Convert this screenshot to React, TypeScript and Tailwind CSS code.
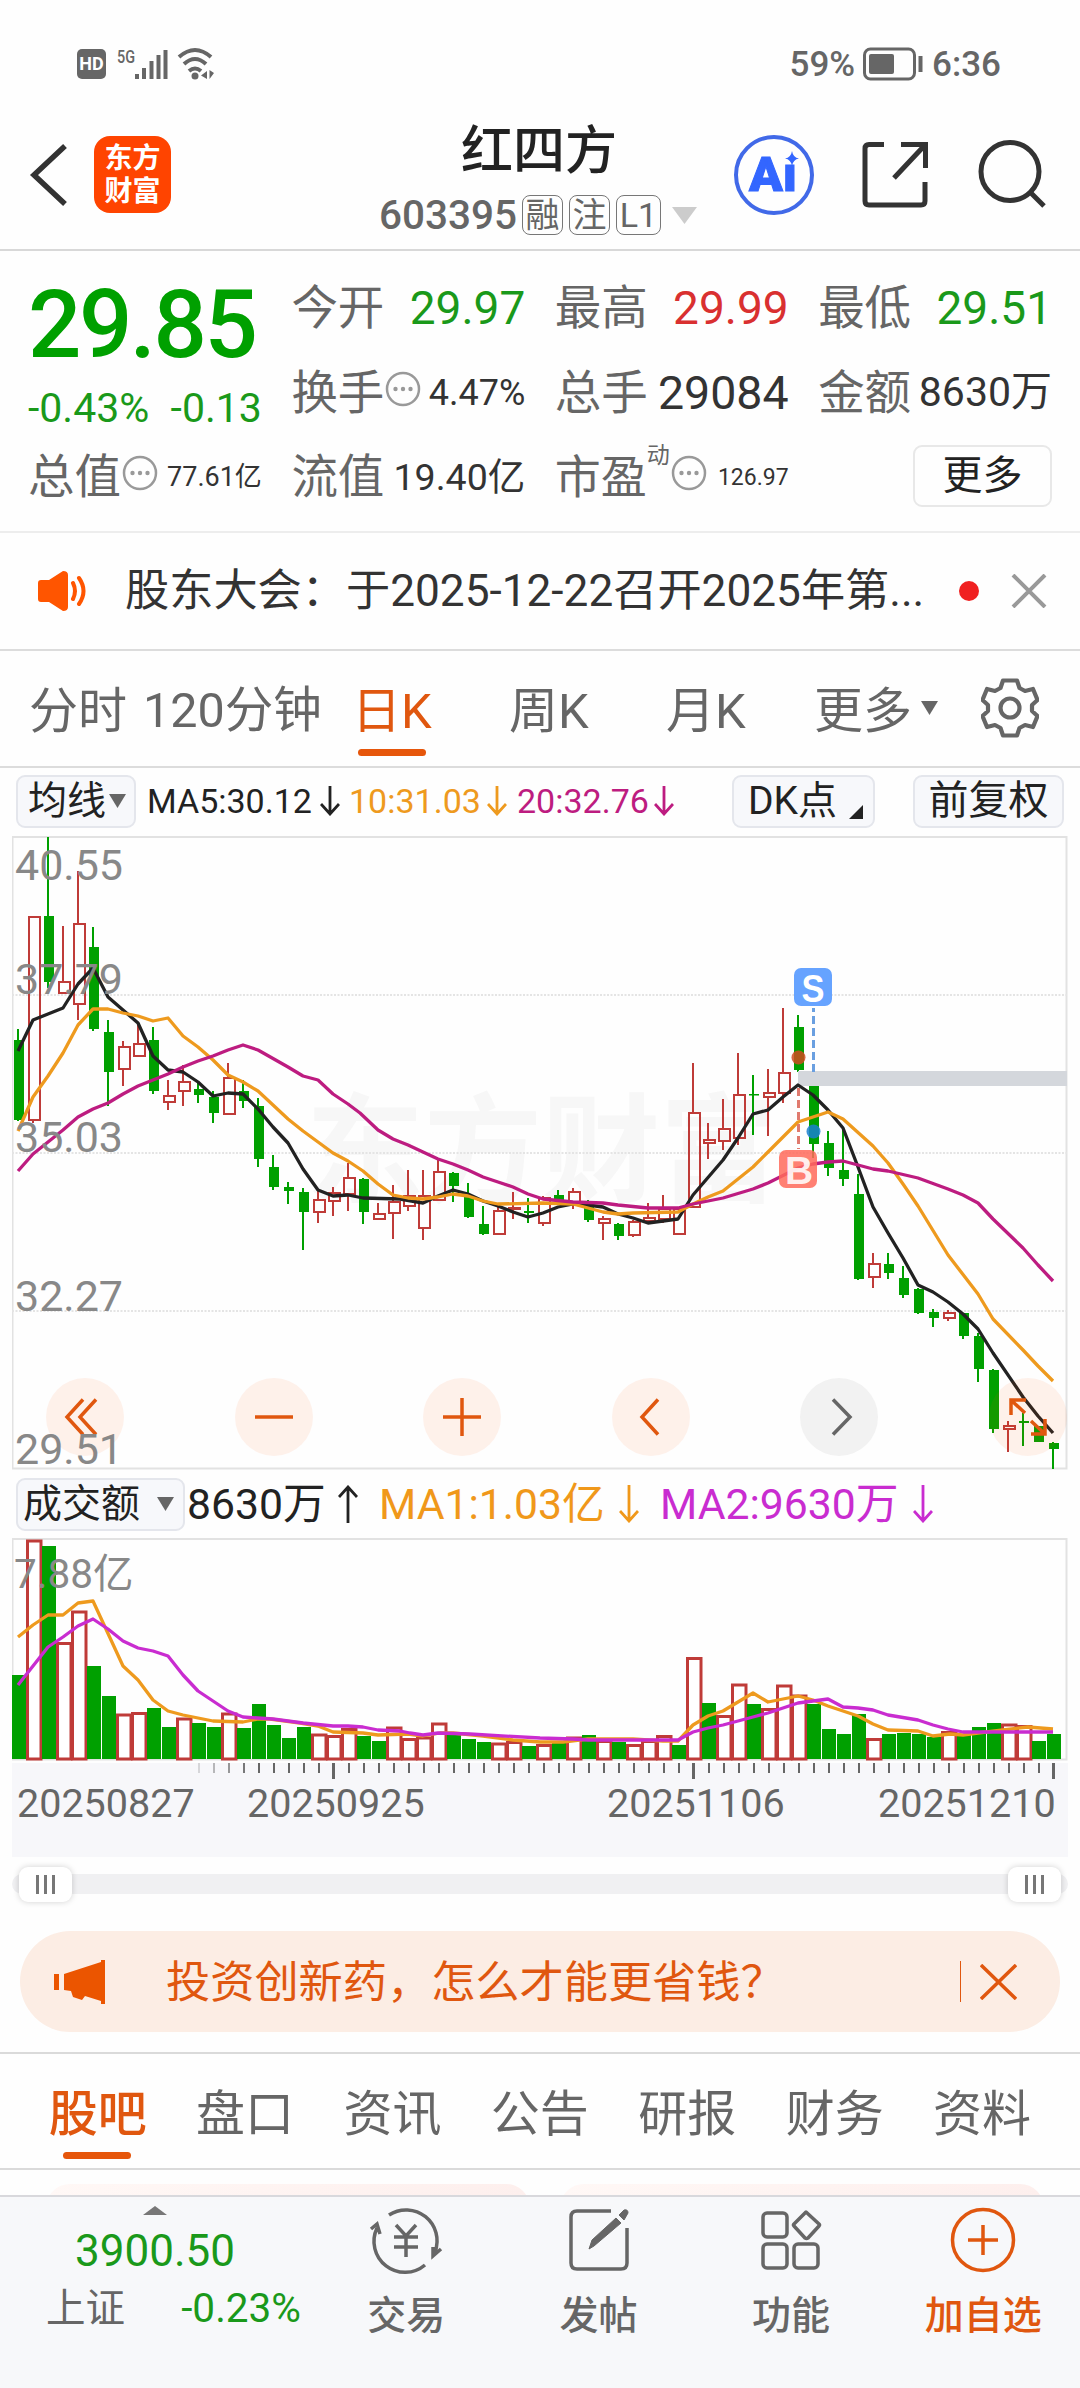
import type { ReactNode } from "react";

// [up, high, bodyTop, bodyBottom, low]
type Candle = [number, number, number, number, number];

const candles: Candle[] = [
  [0, 1029, 1040, 1120, 1121], [1, 916, 916, 1121, 1123], [0, 837, 916, 982, 988], [1, 926, 981, 994, 994],
  [1, 871, 923, 1005, 1020], [0, 927, 947, 1029, 1031], [0, 1020, 1032, 1072, 1106], [1, 1041, 1046, 1070, 1086],
  [1, 1022, 1043, 1057, 1057], [0, 1027, 1040, 1091, 1094], [1, 1080, 1095, 1103, 1110], [1, 1065, 1081, 1092, 1106],
  [0, 1083, 1089, 1095, 1103], [0, 1091, 1097, 1113, 1123], [1, 1063, 1077, 1115, 1115], [0, 1080, 1091, 1101, 1108],
  [0, 1098, 1106, 1159, 1167], [0, 1155, 1167, 1187, 1190], [0, 1182, 1187, 1191, 1204], [0, 1188, 1192, 1212, 1250],
  [1, 1191, 1199, 1213, 1223], [1, 1187, 1192, 1202, 1216], [1, 1163, 1177, 1195, 1211], [0, 1178, 1179, 1212, 1224],
  [1, 1203, 1213, 1220, 1220], [1, 1185, 1201, 1214, 1239], [1, 1170, 1195, 1207, 1211], [1, 1170, 1195, 1229, 1240],
  [1, 1160, 1171, 1201, 1201], [0, 1172, 1173, 1186, 1202], [0, 1183, 1195, 1217, 1218], [0, 1206, 1224, 1234, 1235],
  [1, 1205, 1210, 1235, 1235], [1, 1192, 1207, 1210, 1219], [0, 1198, 1211, 1213, 1223], [1, 1196, 1197, 1224, 1226],
  [0, 1190, 1195, 1201, 1201], [1, 1188, 1191, 1203, 1209], [0, 1200, 1201, 1220, 1222], [1, 1216, 1218, 1224, 1240],
  [0, 1223, 1224, 1236, 1240], [1, 1220, 1221, 1236, 1237], [1, 1203, 1217, 1222, 1223], [1, 1195, 1208, 1220, 1223],
  [1, 1208, 1208, 1235, 1235], [1, 1063, 1112, 1208, 1208], [1, 1123, 1139, 1144, 1159], [1, 1099, 1128, 1142, 1150],
  [1, 1053, 1094, 1139, 1145], [0, 1075, 1094, 1095.5, 1135], [1, 1069, 1092, 1098, 1136], [1, 1008, 1072, 1094, 1103],
  [0, 1015, 1027, 1070, 1072], [0, 1080, 1080, 1144, 1158], [0, 1131, 1143, 1168, 1176], [0, 1127, 1170, 1179, 1186],
  [0, 1174, 1194, 1279, 1280], [1, 1253, 1263, 1278, 1288], [0, 1253, 1264, 1273, 1279], [0, 1266, 1278, 1295, 1298],
  [0, 1288, 1289, 1313, 1314], [0, 1309, 1312, 1318, 1327], [1, 1310, 1312, 1319, 1321], [0, 1313, 1313, 1336, 1339],
  [0, 1333, 1336, 1369, 1382], [0, 1369, 1370, 1429, 1433], [1, 1421, 1425, 1430, 1452], [0, 1413, 1421, 1423, 1446],
  [0, 1426, 1426, 1442, 1442], [0, 1442, 1443, 1449, 1469],
];

// [up, barTop]
const volumes: [number, number][] = [
  [0, 1675], [1, 1539.5], [0, 1546], [1, 1642], [1, 1610.5], [0, 1666], [0, 1696], [1, 1713.5], [1, 1712], [0, 1708],
  [0, 1727], [1, 1717.5], [0, 1723], [0, 1727], [1, 1712.5], [0, 1728], [0, 1704], [0, 1725], [0, 1738], [0, 1727],
  [1, 1733.5], [1, 1735], [1, 1728], [0, 1736], [0, 1741], [1, 1726.5], [1, 1738], [1, 1736.5], [1, 1722.5], [0, 1735],
  [0, 1739], [0, 1742], [1, 1742.5], [1, 1741], [0, 1746], [1, 1744], [0, 1743], [1, 1736.5], [0, 1735], [1, 1740],
  [0, 1742], [1, 1744], [1, 1740], [1, 1735], [0, 1745], [1, 1657], [0, 1703], [1, 1715], [1, 1683.5], [0, 1704],
  [1, 1708], [1, 1684.5], [1, 1694.5], [0, 1704], [0, 1729], [0, 1734], [0, 1714], [1, 1738], [0, 1734], [0, 1733],
  [0, 1734], [0, 1737], [1, 1731], [0, 1735], [0, 1727], [0, 1723], [1, 1723.5], [1, 1725], [0, 1741], [0, 1734],
];

const ma5 =
  "18,1051 33,1020 48,1014 63,1008 78,984 93,968 108,997 123,1010 138,1023 153,1056 168,1070 183,1072 198,1082 213,1096 228,1093 243,1094 258,1109 273,1127 288,1143 303,1169 318,1190 333,1196 348,1195 363,1198 400,1199 423,1203 438,1196 453,1190 468,1194 483,1201 498,1206 513,1212 528,1217 543,1213 558,1207 573,1204 588,1205 603,1207 618,1214 633,1218 648,1223 663,1221 678,1219 693,1195 723,1160 738,1138 753,1114 768,1110 783,1097 798,1085 813,1095 828,1110 843,1128 858,1167 873,1207 888,1233 903,1258 918,1285 933,1292 948,1302 963,1314 978,1329 993,1353 1023,1397 1038,1416 1053,1433";
const ma10 =
  "18,1131 33,1097 48,1076 63,1053 78,1025 93,1009 108,1009 123,1013 138,1016 153,1021 168,1018 183,1036 198,1047 213,1060 228,1075 243,1082 258,1091 273,1105 288,1119 303,1131 318,1142 333,1153 348,1161 363,1171 378,1184 393,1195 408,1198 423,1199 438,1197 453,1194 468,1196 483,1201 498,1204 543,1203 573,1204 588,1208 603,1212 618,1214 633,1213 678,1212 693,1204 708,1197 723,1191 753,1167 768,1152 798,1122 813,1117 828,1112 843,1119 873,1146 888,1163 903,1184 918,1206 948,1255 978,1294 993,1319 1023,1350 1038,1366 1053,1381";
const ma20 =
  "18,1171 33,1154 48,1142 63,1130 78,1117 93,1109 108,1103 123,1094 138,1086 168,1074 183,1067 198,1061 213,1056 228,1050 243,1045 258,1050 288,1067 303,1076 318,1080 333,1094 348,1104 360,1113 378,1130 393,1139 408,1145 423,1152 438,1159 453,1164 468,1170 483,1177 498,1182 513,1187 528,1194 543,1199 573,1202 603,1203 618,1205 648,1208 678,1208 693,1204 723,1198 753,1189 768,1183 798,1168 813,1164 828,1162 843,1161 873,1169 888,1171 918,1178 948,1189 963,1195 978,1203 993,1219 1023,1248 1038,1265 1053,1281";
const volMa1 =
  "18,1637 33,1625 48,1615 63,1615 78,1603 93,1601 123,1666 138,1680 153,1700 168,1711 183,1715 198,1718 213,1721 243,1722 258,1719 270,1719 300,1723 318,1726 333,1732 363,1733 378,1735 408,1734 423,1736 440,1733 453,1733 483,1736 513,1740 540,1742 563,1742 588,1739 633,1739 663,1741 678,1741 693,1725 708,1716 723,1711 753,1693 768,1702 783,1699 798,1696 813,1700 828,1706 858,1716 873,1724 888,1730 918,1731 933,1736 950,1734 963,1735 978,1733 1003,1730 1028,1727 1053,1729";
const volMa2 =
  "18,1685 33,1666 48,1647 63,1637 78,1626 93,1619 108,1629 123,1641 138,1648 153,1651 168,1656 183,1675 198,1691 228,1711 243,1717 273,1719 303,1723 333,1726 348,1726 363,1727 378,1730 400,1731 410,1733 423,1735 438,1733 470,1734 540,1738 573,1739 588,1740 633,1740 678,1740 693,1732 708,1728 723,1725 738,1721 753,1717 768,1713 798,1703 813,1701 828,1699 843,1707 858,1708 873,1710 888,1715 918,1720 933,1725 948,1729 963,1732 1053,1732";

const priceLabels: [string, number][] = [
  ["40.55", 880],
  ["37.79", 994],
  ["35.03", 1152],
  ["32.27", 1311],
  ["29.51", 1464],
];

function StatusBar() {
  return (
    <div className="flex h-[100px] items-center pl-[77px] pr-[79px] pt-[32px] pb-1 text-[#666]">
      <span className="flex h-[30px] w-[29px] items-center justify-center rounded-[5px] bg-[#666] text-[18px] font-bold leading-none text-white">
        HD
      </span>
      <svg className="ml-[9px] overflow-visible" width="99" height="32" viewBox="115 48 99 32">
        <text x="117" y="63" fontSize="19" fontWeight="500" fill="#666" textLength="18" lengthAdjust="spacingAndGlyphs">5G</text>
        <path d="M137 74V79M144 68V79M151.500 61V79M158.500 55V79M165.500 50V79" stroke="#666" strokeWidth="4" />
        <path d="M179 57Q195 43 211 57M184 64Q195 54 206 64M189 71Q195 66 201 71" fill="none" stroke="#666" strokeWidth="4" />
        <circle cx="195" cy="76" r="3.500" fill="#666" />
        <path d="M207 71V79L201 75.500ZM209.500 70V79L214 73Z" fill="#666" />
      </svg>
      <span className="ml-auto text-[35px] font-medium leading-none">59%</span>
      <svg className="ml-[8px]" width="62" height="34" viewBox="0 0 62 34">
        <rect x="1.500" y="2" width="50" height="30" rx="6" fill="none" stroke="#666" strokeWidth="3" />
        <rect x="6" y="7" width="25" height="20" rx="2" fill="#666" />
        <path d="M57.500 9V25" stroke="#666" strokeWidth="4" />
      </svg>
      <span className="ml-[7px] text-[35px] font-medium leading-none">6:36</span>
    </div>
  );
}

function Badge({ children, className }: { children: ReactNode; className: string }) {
  return (
    <span className={`flex h-[40px] items-center justify-center rounded-[8px] border border-[#777] text-[34px] leading-none text-[#666] ${className}`}>
      {children}
    </span>
  );
}

function Header() {
  return (
    <header className="flex h-[151px] border-b-2 border-[#d8d8d8] pl-[28px]">
      <svg className="mt-[43px]" width="42" height="64" viewBox="28 143 42 64">
        <path d="M65 146L34 175L65 204" fill="none" stroke="#333" strokeWidth="5.500" />
      </svg>
      <div className="ml-[24px] mt-[36px] flex h-[77px] w-[77px] flex-col items-center justify-center rounded-[16px] bg-[#ff4400] text-[28px] font-bold leading-[33px] text-white">
        <span>东方</span>
        <span>财富</span>
      </div>
      <div className="flex w-[738px] flex-col pl-[208px]">
        <h1 className="mt-[26px] pl-[82px] text-[52px] font-medium leading-[52px] text-[#222]">红四方</h1>
        <div className="mt-[17px] flex h-[40px] items-center">
          <span className="w-[142px] text-[40.5px] font-medium leading-none text-[#666]">603395</span>
          <Badge className="ml-px w-[41px]">融</Badge>
          <Badge className="ml-[6px] w-[41px]">注</Badge>
          <Badge className="ml-[6px] w-[45px]">L1</Badge>
          <svg className="ml-[11px]" width="25" height="17" viewBox="0 0 25 17">
            <path d="M0 0H25L12.500 17Z" fill="#ccc" />
          </svg>
        </div>
      </div>
      <svg className="-ml-[180px] mt-[33px]" width="320" height="84" viewBox="730 133 320 84">
        <circle cx="775" cy="175" r="38" fill="none" stroke="#4169e8" strokeWidth="4" />
        <text x="750" y="191" fontSize="48" fontWeight="900" fill="#3366ff" stroke="#3366ff" textLength="48" lengthAdjust="spacingAndGlyphs">Aı</text>
        <path d="M793 151Q794 157.500 800 158.500Q794 159.500 793 166Q792 159.500 786 158.500Q792 157.500 793 151Z" fill="#3366ff" />
        <path d="M885 144.500H870Q866 144.500 866 148.500V201Q866 205 870 205H922Q926 205 926 201V182M902 144.500H926.500V168M926 145L895 178" fill="none" stroke="#333" strokeWidth="5" />
        <circle cx="1011" cy="171.500" r="29" fill="none" stroke="#333" strokeWidth="5" />
        <path d="M1031 192L1045 206" stroke="#333" strokeWidth="5" />
      </svg>
    </header>
  );
}

function InfoDot({ className = "" }: { className?: string }) {
  return (
    <svg className={className} width="36" height="36" viewBox="0 0 36 36">
      <circle cx="18" cy="18" r="16" fill="none" stroke="#999" strokeWidth="2.500" />
      <circle cx="10.500" cy="18" r="2.200" fill="#999" />
      <circle cx="18" cy="18" r="2.200" fill="#999" />
      <circle cx="25.500" cy="18" r="2.200" fill="#999" />
    </svg>
  );
}

function Stat({ label, children, info }: { label: string; children: ReactNode; info?: boolean }) {
  return (
    <div className="flex h-[84.5px] items-center justify-between whitespace-nowrap leading-none">
      <div className="flex items-center text-[46.5px] text-[#666]">
        {label}
        {info && <InfoDot className="mb-[8px] ml-px" />}
      </div>
      {children}
    </div>
  );
}

function Quote() {
  return (
    <section className="grid h-[282px] grid-cols-4 gap-x-[29.5px] border-b-2 border-[#ededed] pl-[28px] pr-[28px] pt-[15px]">
      <div className="whitespace-nowrap leading-none text-[#00a000]">
        <div className="h-[115px] pt-[12px] text-[94px] font-medium tracking-[-2.5px]">29.85</div>
        <div className="flex h-[54px] items-center justify-between text-[41px] text-[#1a991a]">
          <span>-0.43%</span>
          <span>-0.13</span>
        </div>
        <Stat label="总值" info>
          <span className="text-[27px] text-[#333]">77.61亿</span>
        </Stat>
      </div>
      <div>
        <Stat label="今开"><span className="text-[46px] text-[#1a991a]">29.97</span></Stat>
        <Stat label="换手" info><span className="text-[36px] text-[#333]">4.47%</span></Stat>
        <Stat label="流值"><span className="text-[37.5px] text-[#333]">19.40亿</span></Stat>
      </div>
      <div>
        <Stat label="最高"><span className="text-[46px] text-[#d93030]">29.99</span></Stat>
        <Stat label="总手"><span className="text-[46.5px] text-[#333]">29084</span></Stat>
        <div className="flex h-[84.5px] items-center whitespace-nowrap leading-none text-[#666]">
          <span className="text-[46px]">市盈</span>
          <span className="-mt-[44px] text-[23px]">动</span>
          <InfoDot className="mb-[8px] ml-px" />
          <span className="ml-auto text-[23px] text-[#333]">126.97</span>
        </div>
      </div>
      <div>
        <Stat label="最低"><span className="text-[46px] text-[#1a991a]">29.51</span></Stat>
        <Stat label="金额"><span className="text-[41px] text-[#333]">8630万</span></Stat>
        <button className="ml-auto mt-[10px] flex h-[62px] w-[139px] items-center justify-center rounded-[9px] border-2 border-[#e8e8e8] text-[40px] leading-none text-[#222]">
          更多
        </button>
      </div>
    </section>
  );
}

function Notice() {
  return (
    <section className="flex h-[118px] items-center border-b-2 border-[#dcdcdc] pl-[38px] pr-[33px]">
      <svg width="51" height="40" viewBox="0 0 51 40">
        <path d="M0 12Q0 9 3 9H11L25 0Q30 0 30 4V36Q30 40 25 40L11 31H3Q0 31 0 28Z" fill="#ff5500" />
        <path d="M35 12Q39 20 35 28M41 7Q50 20 41 33" fill="none" stroke="#ff5500" strokeWidth="4" strokeLinecap="round" />
      </svg>
      <p className="ml-[36px] whitespace-nowrap text-[44.2px] leading-none text-[#333]">股东大会：于2025-12-22召开2025年第...</p>
      <span className="ml-auto h-[20px] w-[20px] rounded-full bg-[#f02020]" />
      <svg className="ml-[32px]" width="36" height="34" viewBox="0 0 36 34">
        <path d="M2 1L34 33M34 1L2 33" stroke="#999" strokeWidth="4" />
      </svg>
    </section>
  );
}

function PeriodTabs() {
  return (
    <nav className="flex h-[117px] items-center whitespace-nowrap border-b-2 border-[#dcdcdc] pl-[29px] pt-[6px] text-[49px] leading-none text-[#666]">
      <span className="w-[114px]">分时</span>
      <span className="w-[209px] text-[48.5px]">120分钟</span>
      <span className="relative w-[157px] text-[#e0570f]">
        日K
        <i className="absolute left-[6px] top-[62px] h-[7px] w-[68px] rounded-full bg-[#e6560b]" />
      </span>
      <span className="w-[157px]">周K</span>
      <span className="w-[148px]">月K</span>
      <span>更多</span>
      <svg className="mb-[6px] ml-[9px]" width="18" height="15" viewBox="0 0 18 15">
        <path d="M0 0H17L8.500 14Z" fill="#666" />
      </svg>
      <svg className="mb-[8px] ml-[42px]" width="58" height="60" viewBox="-29 -30 58 60">
        <path
          d="M-7 -27.500H7L9.500 -20L15 -17L23 -19L27.500 -8L22 -3V3L27.500 8L23 19L15 17L9.500 20L7 27.500H-7L-9.500 20L-15 17L-23 19L-27.500 8L-22 3V-3L-27.500 -8L-23 -19L-15 -17L-9.500 -20Z"
          fill="none"
          stroke="#666"
          strokeWidth="4.200"
          strokeLinejoin="round"
        />
        <circle r="9.500" fill="none" stroke="#666" strokeWidth="4.200" />
      </svg>
    </nav>
  );
}

function Arrow({ up, color, h, className = "" }: { up?: boolean; color: string; h: number; className?: string }) {
  return (
    <svg className={className} width="20" height={h} viewBox={`0 0 20 ${h}`}>
      <path
        d={up ? `M10 ${h}V2M1 12L10 2L19 12` : `M10 0V${h - 2}M1 ${h - 12}L10 ${h - 2}L19 ${h - 12}`}
        fill="none"
        stroke={color}
        strokeWidth="2.800"
      />
    </svg>
  );
}

const chip = "flex items-center rounded-[9px] border-2 border-[#e4e6ec] bg-[#f7f8fb] leading-none text-[#222]";

function Indicators() {
  return (
    <div className="flex h-[68px] items-center whitespace-nowrap pb-[2px] pl-[16px] text-[34px] leading-none">
      <button className={`${chip} h-[53px] w-[120px] pl-[10px] text-[39px]`}>
        均线
        <svg className="ml-[3px]" width="17" height="14" viewBox="0 0 17 14">
          <path d="M0 0H17L8.500 14Z" fill="#666" />
        </svg>
      </button>
      <span className="ml-[11px] w-[173px] text-[#222]">MA5:30.12</span>
      <Arrow color="#222" h={30} />
      <span className="ml-[9px] w-[138px] text-[#ee9a1e]">10:31.03</span>
      <Arrow color="#ee9a1e" h={30} />
      <span className="ml-[10px] w-[137px] text-[#bd1c80]">20:32.76</span>
      <Arrow color="#bd1c80" h={30} />
      <button className={`${chip} ml-[58px] h-[53px] w-[143px] pl-[14px] text-[39px]`}>
        DK点
        <svg className="ml-[12px] mt-[22px]" width="14" height="14" viewBox="0 0 14 14">
          <path d="M14 0V14H0Z" fill="#222" />
        </svg>
      </button>
      <button className={`${chip} ml-[38px] h-[53px] w-[151px] justify-center text-[40px]`}>前复权</button>
    </div>
  );
}

function RoundButton({ gray, children }: { gray?: boolean; children: ReactNode }) {
  return (
    <button className={`flex h-[78px] w-[78px] items-center justify-center rounded-full ${gray ? "bg-[#f2f2f2] text-[#666]" : "bg-[#ff5500]/8 text-[#e0570f]"}`}>
      <svg width="44" height="44" viewBox="-22 -22 44 44" fill="none" stroke="currentColor" strokeWidth="3.500">
        {children}
      </svg>
    </button>
  );
}

function PriceChart() {
  return (
    <div className="relative h-[634px] pl-[12px]">
      <svg width="1056" height="634" viewBox="12 836 1056 634">
        <text x="306" y="1193" fontSize="118" fontWeight="700" fill="#f7f7f7">东方财富</text>
        <rect x="12.500" y="837" width="1054" height="631.500" fill="none" stroke="#e2e2e2" strokeWidth="2" />
        <path d="M12 995H1067M12 1153H1067M12 1311H1067" stroke="#e4e4e4" strokeWidth="2" strokeDasharray="2 1.500" />
        {candles.map(([up, high, top, bottom, low], i) => {
          const x = 18 + i * 15;
          return up ? (
            <g key={i} stroke="#bf3b38" strokeWidth="2" fill="none">
              <path d={`M${x} ${high}V${top}M${x} ${bottom}V${low}`} />
              <rect x={x - 4} y={top + 1} width="11" height={Math.max(bottom - top - 2, 1)} />
            </g>
          ) : (
            <g key={i} fill="#00a000">
              <rect x={x - 1} y={high} width="2" height={low - high} />
              <rect x={x - 4} y={top} width="10" height={bottom - top} />
            </g>
          );
        })}
        <rect x="798" y="1071" width="269" height="15" fill="#d4d7dc" />
        <g fill="none" strokeWidth="3.300" strokeLinejoin="round">
          <polyline points={ma5} stroke="#222" />
          <polyline points={ma10} stroke="#ee9a1e" />
          <polyline points={ma20} stroke="#bd1c80" />
        </g>
        <path d="M813.500 1008V1072" stroke="#6a9fe0" strokeWidth="3" strokeDasharray="8 4" strokeDashoffset="4" />
        <path d="M798.500 1088V1149" stroke="#e07a6e" strokeWidth="3" strokeDasharray="8 4" />
        <circle cx="798.500" cy="1057.500" r="7" fill="#d04a20" fillOpacity=".85" />
        <circle cx="813.500" cy="1131.500" r="7" fill="#1a80d0" fillOpacity=".85" />
        <rect x="794" y="968" width="38" height="38" rx="7" fill="#66a3ff" />
        <text x="813" y="1001.500" fontSize="39" fontWeight="700" fill="#fff" textAnchor="middle" fontFamily="Liberation Sans" textLength="23" lengthAdjust="spacingAndGlyphs">S</text>
        <rect x="779" y="1150" width="38" height="38" rx="7" fill="#ff6a5a" fillOpacity=".85" />
        <text x="799" y="1183.500" fontSize="39" fontWeight="700" fill="#fff" fillOpacity=".9" textAnchor="middle" fontFamily="Liberation Sans">B</text>
      </svg>
      {/* zoom / pan controls float over the candles */}
      <div className="absolute left-[46px] top-[542px] flex w-[1021px] justify-between">
        <RoundButton><path d="M-2 -17.500L-18 0L-2 17.500M11 -17.500L-5 0L11 17.500" /></RoundButton>
        <RoundButton><path d="M-19 0H19" /></RoundButton>
        <RoundButton><path d="M-19 0H19M0 -19V19" /></RoundButton>
        <RoundButton><path d="M7 -17.500L-9 0L7 17.500" /></RoundButton>
        <RoundButton gray><path d="M-6 -17.500L11 0L-6 17.500" /></RoundButton>
        <RoundButton><path d="M-17 -2V-17H-2M-16 -16L-3 -4M3 4L17 17M17 2V17H3" /></RoundButton>
      </div>
      <svg className="absolute left-[12px] top-0 overflow-visible" width="140" height="644" viewBox="12 836 140 644">
        {priceLabels.map(([label, y]) => (
          <text key={label} x="15" y={y} fontSize="43" fill="#888">{label}</text>
        ))}
      </svg>
    </div>
  );
}

function VolumeBar() {
  return (
    <div className="flex h-[68px] items-center whitespace-nowrap pl-[16px] text-[42.7px] leading-none">
      <button className={`${chip} h-[53px] w-[169px] pl-[5px] text-[39px]`}>
        成交额
        <svg className="ml-[17px]" width="17" height="14" viewBox="0 0 17 14">
          <path d="M0 0H17L8.500 14Z" fill="#666" />
        </svg>
      </button>
      <span className="ml-[2px] w-[151px] text-[#222]">8630万</span>
      <Arrow up color="#222" h={38} />
      <span className="ml-[21px] w-[240px] text-[#f0981a]">MA1:1.03亿</span>
      <Arrow color="#f0981a" h={38} />
      <span className="ml-[21px] w-[253px] text-[#c92cd0]">MA2:9630万</span>
      <Arrow color="#c92cd0" h={38} />
    </div>
  );
}

function VolumeChart() {
  return (
    <svg className="ml-[12px] block" width="1056" height="319" viewBox="12 1538 1056 319">
      <rect x="12.500" y="1539" width="1054" height="220.500" fill="none" stroke="#e2e2e2" strokeWidth="2" />
      <rect x="12" y="1763" width="1056" height="94" fill="#f7f7fa" />
      {volumes.map(([up, top], i) => {
        const x = 18 + i * 15;
        return up ? (
          <rect key={i} x={x - 5.5} y={top + 1.5} width="13.500" height={1757.5 - top} fill="#fff" stroke="#bf3b38" strokeWidth="3" />
        ) : (
          <rect key={i} x={x - 6} y={top} width="14" height={1759 - top} fill="#00a000" />
        );
      })}
      <g fill="none" strokeWidth="3.300" strokeLinejoin="round">
        <polyline points={volMa1} stroke="#ee9a1e" />
        <polyline points={volMa2} stroke="#c92cd0" />
      </g>
      {volumes.map((_, i) => {
        if (i < 12) return null;
        const major = i === 21 || i === 45 || i === 69;
        return (
          <rect
            key={i}
            x={major ? 17 + i * 15 : 18 + i * 15}
            y="1763"
            width={major ? 3 : 2}
            height={major ? 16 : 10}
            fill="#666"
            opacity={Math.min(1, (i - 11) * 0.22)}
          />
        );
      })}
      <text x="14" y="1588" fontSize="40.500" fill="#888">7.88亿</text>
      <g fontSize="39.500" fill="#666">
        <text x="17" y="1817">20250827</text>
        <text x="247" y="1817">20250925</text>
        <text x="607" y="1817">20251106</text>
        <text x="878" y="1817">20251210</text>
      </g>
    </svg>
  );
}

function Grip() {
  return (
    <span className="flex h-[35px] w-[53px] items-center justify-center gap-[5px] rounded-[9px] bg-white shadow-[0_0_6px_rgba(0,0,0,0.18)]">
      <i className="h-[19px] w-[3px] bg-[#777]" />
      <i className="h-[19px] w-[3px] bg-[#777]" />
      <i className="h-[19px] w-[3px] bg-[#777]" />
    </span>
  );
}

function RangeSlider() {
  return (
    <div className="mx-[12px] mt-[17px] flex h-[20px] items-center justify-between rounded-full bg-[#f0f0f2] px-[7px]">
      <Grip />
      <Grip />
    </div>
  );
}

function Banner() {
  return (
    <div className="ml-[20px] mt-[37px] flex h-[101px] w-[1040px] items-center rounded-full bg-[#fcede4] pl-[34px] text-[#e0570f]">
      <svg width="51" height="44" viewBox="0 0 51 44">
        <path d="M0 14H5V30H0ZM10 14L47 2V0H51V44H47V41L31 36L28 40L19 37L17 31L10 30Z" fill="#eb5500" />
      </svg>
      <span className="ml-[61px] mt-[3px] w-[794px] whitespace-nowrap text-[44.2px] leading-none">投资创新药，怎么才能更省钱？</span>
      <i className="h-[41px] w-px bg-[#e0570f]" />
      <svg className="ml-[19px]" width="37" height="36" viewBox="0 0 37 36">
        <path d="M1 1L36 35M36 1L1 35" stroke="#e0570f" strokeWidth="3.500" />
      </svg>
    </div>
  );
}

function InfoTabs() {
  return (
    <nav className="mt-[20px] flex h-[118px] items-center border-y-2 border-[#dadada] pl-[24px] pt-[7px] text-[49px] leading-none text-[#666]">
      {["股吧", "盘口", "资讯", "公告", "研报", "财务", "资料"].map((tab, i) => (
        <span key={tab} className={`relative w-[147.4px] text-center ${i === 0 ? "font-medium text-[#e0570f]" : ""}`}>
          {tab}
          {i === 0 && <i className="absolute left-[39px] top-[62px] h-[7px] w-[68px] rounded-full bg-[#e6560b]" />}
        </span>
      ))}
    </nav>
  );
}

function NavItem({ label, active, children }: { label: string; active?: boolean; children: ReactNode }) {
  return (
    <div className={`flex w-[192.4px] flex-col items-center ${active ? "text-[#e0570f]" : "text-[#666]"}`}>
      <svg className="mt-[5px]" width="76" height="76" viewBox="-38 -38 76 76" fill="none" stroke="currentColor" strokeWidth="3.500">
        {children}
      </svg>
      <span className="mt-[19px] text-[39px] font-medium leading-none">{label}</span>
    </div>
  );
}

function BottomBar() {
  return (
    <footer className="flex h-[193px] border-t-2 border-[#d8d8dc] bg-[#f7f8fa]">
      <div className="flex w-[310px] flex-col items-center leading-none">
        <svg className="mt-[9px]" width="24" height="9" viewBox="0 0 24 9">
          <path d="M0 9L12 0L24 9Z" fill="#777" />
        </svg>
        <span className="mt-[14px] text-[44px] text-[#1a991a]">3900.50</span>
        <div className="mt-[15px] flex w-full items-center justify-between pl-[46px] pr-[9px]">
          <span className="text-[39.5px] text-[#666]">上证</span>
          <span className="text-[40.5px] text-[#1a991a]">-0.23%</span>
        </div>
      </div>
      <NavItem label="交易">
        <path d="M-17 -25A31 31 0 0 1 29 12L27 16M19 25A31 31 0 0 1 -29 -12M-35 -11L-29 -16L-26 -6M35 9L27 16V7" />
        <path d="M-10 -15L0 -4L10 -15M0 -4V17M-12 -3H12M-12 7H12" />
      </NavItem>
      <NavItem label="发帖">
        <path d="M12 -29H-22Q-28 -29 -28 -23V23Q-28 29 -22 29H22Q28 29 28 23V-12" />
        <path d="M-10 9L-7 0L17 -22L22 -17L-5 6ZM20 -25L25 -30Q29 -31 29 -27L25 -20Z" fill="currentColor" strokeWidth="1" />
      </NavItem>
      <NavItem label="功能">
        <rect x="-28" y="-27" width="24" height="24" rx="4" />
        <rect x="-28" y="4" width="24" height="24" rx="4" />
        <rect x="3" y="4" width="24" height="24" rx="4" />
        <path d="M15 -28L28 -16Q29 -15 28 -14L17 -2Q15.500 -1 14 -2L3 -14Q2 -15 3 -16Z" strokeLinejoin="round" />
      </NavItem>
      <NavItem label="加自选" active>
        <circle r="30.500" />
        <path d="M-15 0H15M0 -15V15" />
      </NavItem>
    </footer>
  );
}

export default function App() {
  return (
    <main className="h-[2388px] w-[1080px] overflow-hidden bg-[#fefefe] font-['Roboto','Noto_Sans_CJK_SC',sans-serif]">
      <StatusBar />
      <Header />
      <Quote />
      <Notice />
      <PeriodTabs />
      <Indicators />
      <PriceChart />
      <VolumeBar />
      <VolumeChart />
      <RangeSlider />
      <Banner />
      <InfoTabs />
      {/* top edge of the post cards, cut off by the bottom bar */}
      <div className="flex h-[25px] gap-[30px] overflow-hidden pl-[46px] pt-[14px]">
        <div className="h-[60px] w-[484px] rounded-[24px] bg-linear-to-r from-[#fff8f6] to-[#fdefed]" />
        <div className="h-[60px] w-[484px] rounded-[24px] bg-linear-to-r from-[#fff8f6] to-[#fdefed]" />
      </div>
      <BottomBar />
    </main>
  );
}
